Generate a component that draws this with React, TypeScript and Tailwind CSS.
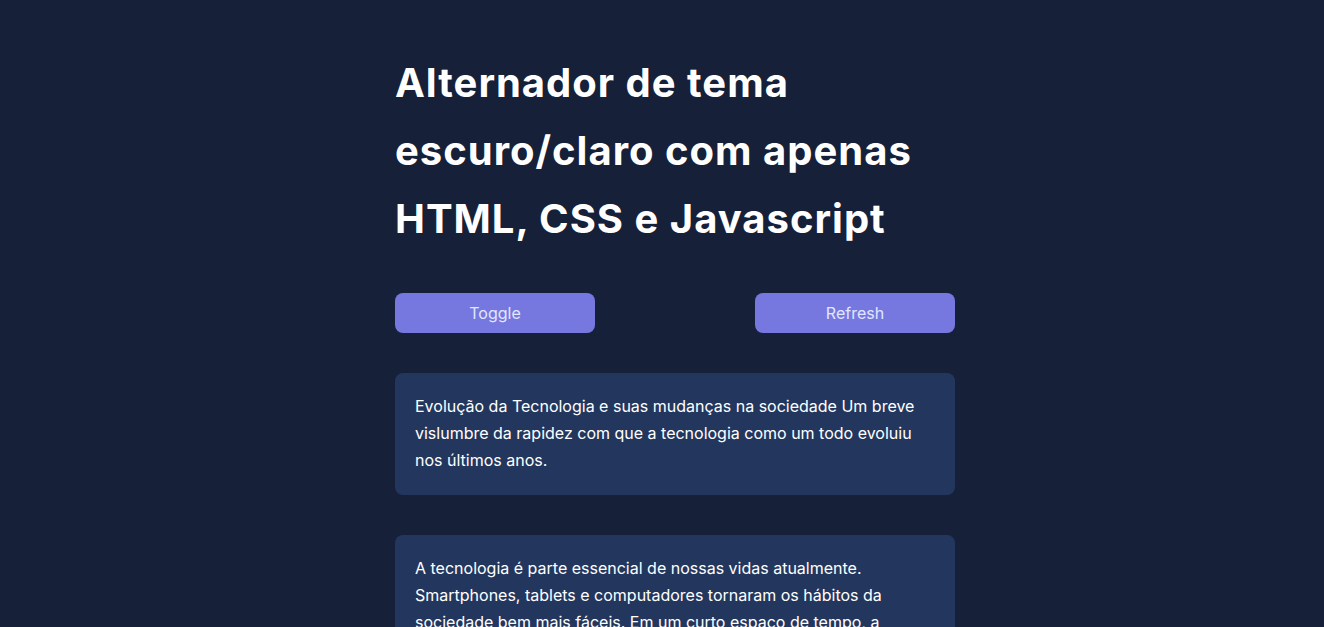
export default function App() {
  return (
    <div
      className="min-h-screen bg-[#162039] text-white"
      style={{ fontFamily: 'Inter, "Noto Sans", sans-serif' }}
    >
      <div className="ml-[395px] w-[560px] pt-[49px]">
        <h1 className="text-[40px] font-bold leading-[1.7] tracking-wide">
          Alternador de tema escuro/claro com apenas HTML, CSS e Javascript
        </h1>
        <div className="mt-10 flex justify-between">
          <button className="h-10 w-[200px] rounded-lg bg-[#7678e0] text-base text-[#e0e7ff]">
            Toggle
          </button>
          <button className="h-10 w-[200px] rounded-lg bg-[#7678e0] text-base text-[#e0e7ff]">
            Refresh
          </button>
        </div>
        <div className="mt-10 flex flex-col gap-10">
          <div className="rounded-lg bg-[#23375e] p-5 text-base leading-[1.7]">
            Evolução da Tecnologia e suas mudanças na sociedade Um breve vislumbre da rapidez com
            que a tecnologia como um todo evoluiu nos últimos anos.
          </div>
          <div className="rounded-lg bg-[#23375e] p-5 text-base leading-[1.7]">
            A tecnologia é parte essencial de nossas vidas atualmente. Smartphones, tablets e
            computadores tornaram os hábitos da sociedade bem mais fáceis. Em um curto espaço de
            tempo, a tecnologia evoluiu de forma impressionante e mudou a maneira como nos
            comunicamos, trabalhamos e aprendemos.
          </div>
        </div>
      </div>
    </div>
  )
}
